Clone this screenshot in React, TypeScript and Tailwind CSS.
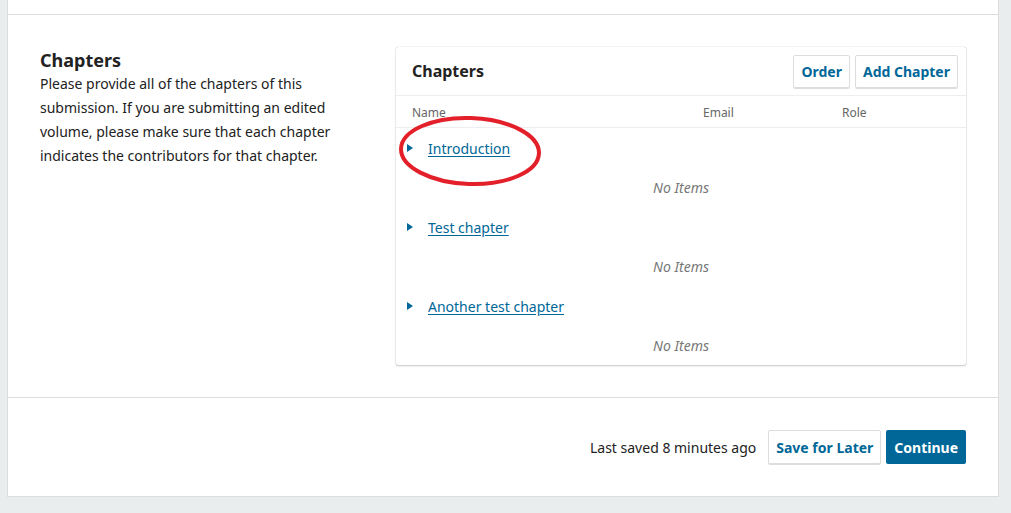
const chapters = ['Introduction', 'Test chapter', 'Another test chapter'];

function Caret() {
  return (
    <svg width="6" height="8" viewBox="0 0 6 8" className="shrink-0">
      <path d="M0 0 L6 4 L0 8 Z" fill="#006798" />
    </svg>
  );
}

function ChapterRow({ title, circled }: { title: string; circled?: boolean }) {
  return (
    <div>
      <div className="relative flex h-[40px] items-center pl-[11px]">
        <Caret />
        <a href="#" className="ml-[15px] text-[14px] text-[#006798] underline underline-offset-2">
          {title}
        </a>
        {circled && (
          <svg
            className="pointer-events-none absolute left-[1px] top-[-13px]"
            width="146"
            height="74"
            viewBox="0 0 146 74"
          >
            <ellipse
              cx="73"
              cy="36"
              rx="69"
              ry="33"
              fill="none"
              stroke="#e3202a"
              strokeWidth="4"
              transform="rotate(2 73 36)"
            />
          </svg>
        )}
      </div>
      <div className="flex h-[39px] items-center justify-center text-[14px] italic text-[#777]">
        No Items
      </div>
    </div>
  );
}

export default function App() {
  return (
    <div
      className="min-h-[513px] bg-[#eaedee] pl-[7px] pr-[12px] pb-[16px] text-[#222]"
      style={{ fontFamily: '"Noto Sans", "Open Sans", sans-serif' }}
    >
      <div className="border-x border-b border-[#ddd] bg-white">
        <div className="h-[15px] border-b border-[#ddd]" />

        <section className="flex gap-[32px] border-b border-[#ddd] px-[32px] py-[32px]">
          <div className="w-[324px] shrink-0 pt-[1px]">
            <h2 className="text-[18px] font-bold leading-[24px]">Chapters</h2>
            <p className="text-[14px] leading-[24px]">
              Please provide all of the chapters of this submission. If you are submitting an edited
              volume, please make sure that each chapter indicates the contributors for that chapter.
            </p>
          </div>

          <div className="flex-1 rounded-[2px] bg-white shadow-[0_0_1px_rgba(0,0,0,0.35),0_1px_2px_rgba(0,0,0,0.2)]">
            <div className="flex h-[49px] items-center justify-between border-b border-[#eee] pl-[16px] pr-[8px]">
              <h3 className="text-[16px] font-bold">Chapters</h3>
              <div className="flex gap-[5px]">
                <button className="h-[33px] rounded-[2px] border border-[#ddd] px-[7px] text-[14px] font-bold text-[#006798] shadow-[0_1px_0_#ddd]">
                  Order
                </button>
                <button className="h-[33px] rounded-[2px] border border-[#ddd] px-[7px] text-[14px] font-bold text-[#006798] shadow-[0_1px_0_#ddd]">
                  Add Chapter
                </button>
              </div>
            </div>
            <div className="flex h-[32px] items-center border-b border-[#eee] pt-[2px] text-[12px] text-[#666]">
              <div className="w-[307px] pl-[16px]">Name</div>
              <div className="w-[139px]">Email</div>
              <div>Role</div>
            </div>
            {chapters.map((c, i) => (
              <ChapterRow key={c} title={c} circled={i === 0} />
            ))}
          </div>
        </section>

        <footer className="flex items-center justify-end px-[32px] py-[32px]">
          <span className="mr-[12px] text-[14px] text-[#222]">Last saved 8 minutes ago</span>
          <button className="h-[34px] rounded-[2px] border border-[#ddd] bg-white px-[7px] text-[14px] font-bold text-[#006798] shadow-[0_1px_0_#ddd]">
            Save for Later
          </button>
          <button className="ml-[5px] h-[34px] rounded-[2px] bg-[#006798] px-[8px] text-[14px] font-bold text-white">
            Continue
          </button>
        </footer>
      </div>
    </div>
  );
}
